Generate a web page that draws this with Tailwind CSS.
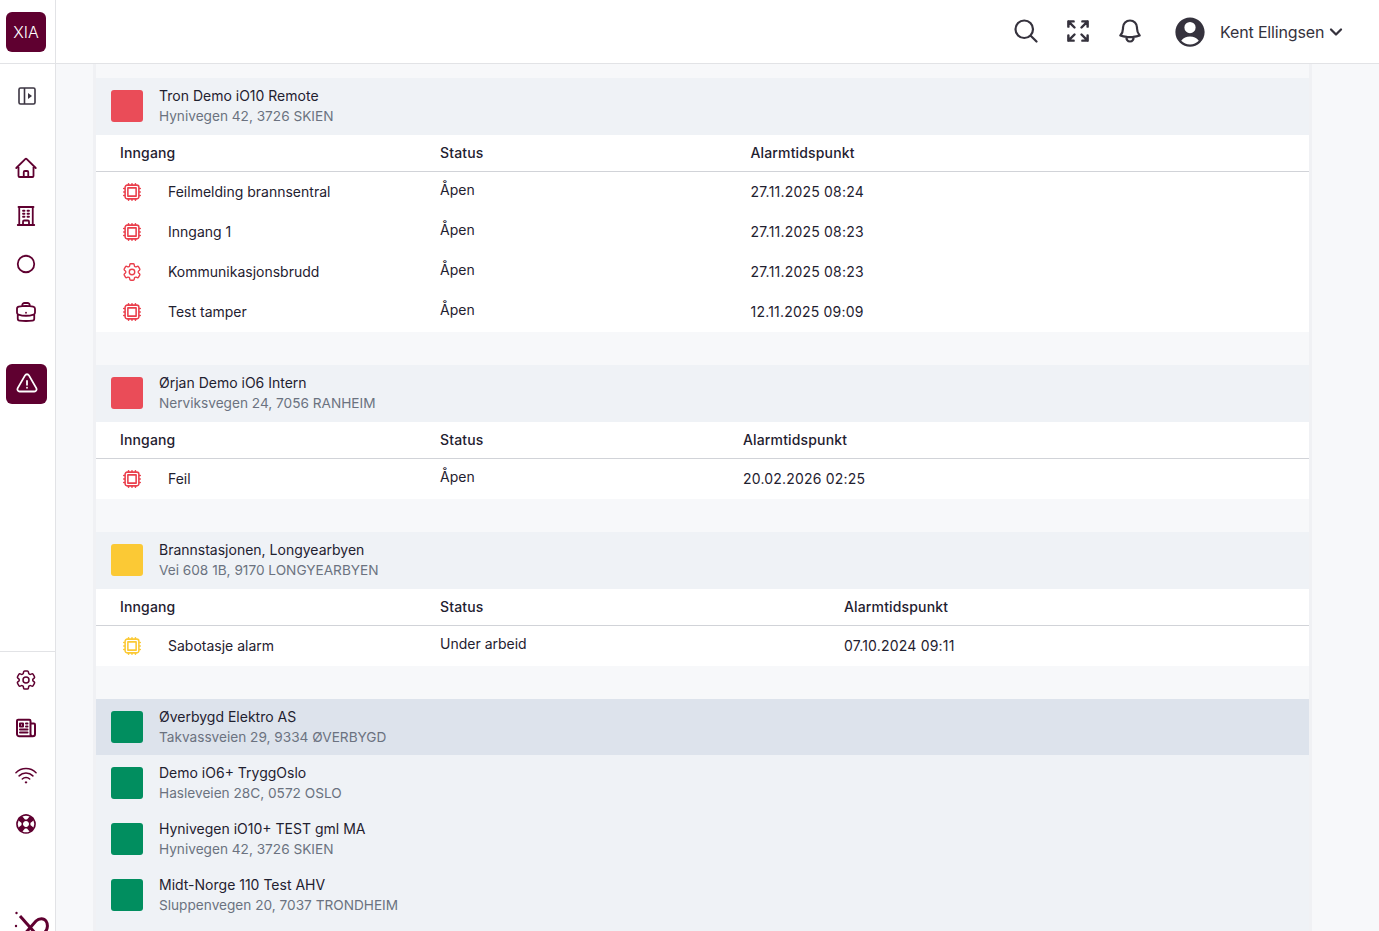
<!DOCTYPE html>
<html lang="no">
<head>
  <meta charset="UTF-8" />
  <script src="https://cdn.jsdelivr.net/npm/@tailwindcss/browser@4"></script>
  <title>XIA alarmer</title>
</head>
<body class="h-screen overflow-hidden bg-[#f7f8fa] font-['Inter',sans-serif] text-sm text-[#1f2130]">
<svg class="hidden">
  <symbol id="chip" viewBox="0 0 24 24"><path fill="none" stroke="currentColor" stroke-width="1.7" stroke-linecap="round" stroke-linejoin="round" d="M8.25 3v1.5M4.5 8.25H3m18 0h-1.5M4.5 12H3m18 0h-1.5m-15 3.75H3m18 0h-1.5M8.25 19.5V21M12 3v1.5m0 15V21m3.75-18v1.5m0 15V21m-9-1.5h10.5a2.25 2.25 0 0 0 2.25-2.25V6.75a2.25 2.25 0 0 0-2.25-2.25H6.75A2.25 2.25 0 0 0 4.5 6.75v10.5a2.25 2.25 0 0 0 2.25 2.25Zm.75-12h9v9h-9v-9Z"/></symbol>
  <symbol id="cog" viewBox="0 0 24 24"><path fill="none" stroke="currentColor" stroke-width="1.5" stroke-linecap="round" stroke-linejoin="round" d="M9.594 3.94c.09-.542.56-.94 1.11-.94h2.593c.55 0 1.02.398 1.11.94l.213 1.281c.063.374.313.686.645.87.074.04.147.083.22.127.325.196.72.257 1.075.124l1.217-.456a1.125 1.125 0 0 1 1.37.49l1.296 2.247a1.125 1.125 0 0 1-.26 1.431l-1.003.827c-.293.241-.438.613-.43.992a7.723 7.723 0 0 1 0 .255c-.008.378.137.75.43.991l1.004.827c.424.35.534.955.26 1.43l-1.298 2.247a1.125 1.125 0 0 1-1.369.491l-1.217-.456c-.355-.133-.75-.072-1.076.124a6.47 6.47 0 0 1-.22.128c-.331.183-.581.495-.644.869l-.213 1.281c-.09.543-.56.94-1.11.94h-2.594c-.55 0-1.019-.398-1.11-.94l-.213-1.281c-.062-.374-.312-.686-.644-.87a6.52 6.52 0 0 1-.22-.127c-.325-.196-.72-.257-1.076-.124l-1.217.456a1.125 1.125 0 0 1-1.369-.49l-1.297-2.247a1.125 1.125 0 0 1 .26-1.431l1.004-.827c.292-.24.437-.613.43-.991a6.932 6.932 0 0 1 0-.255c.007-.38-.138-.751-.43-.992l-1.004-.827a1.125 1.125 0 0 1-.26-1.43l1.297-2.247a1.125 1.125 0 0 1 1.37-.491l1.216.456c.356.133.751.072 1.076-.124.072-.044.146-.086.22-.128.332-.183.582-.495.644-.869l.214-1.28Z M15 12a3 3 0 1 1-6 0 3 3 0 0 1 6 0Z"/></symbol>
</svg>

<div class="flex h-full">
  <!-- sidebar -->
  <aside class="flex h-full w-[56px] shrink-0 flex-col overflow-hidden border-r border-[#e2e3e6] bg-white text-[#5f0030]">
    <div class="flex h-[64px] shrink-0 items-center border-b border-[#e2e3e6] pl-[6px]">
      <div class="flex h-10 w-10 items-center justify-center rounded-md bg-[#5f0030] text-base font-light text-white">XIA</div>
    </div>
    <div class="flex h-[588px] shrink-0 flex-col border-b border-[#e2e3e6]">
      <div class="flex h-[64px] shrink-0 items-center pl-[18px] text-[#3b3542]">
        <svg class="h-[18px] w-[18px]" viewBox="0 0 18 18"><rect x="1" y="1" width="16" height="16" rx="1.5" fill="none" stroke="currentColor" stroke-width="1.6"/><path d="M6.5 1v16" stroke="currentColor" stroke-width="1.6"/><path d="M10 6l4 3-4 3z" fill="currentColor"/></svg>
      </div>
      <div class="mt-[28px] flex flex-col items-start gap-6 pl-[14px]">
        <svg class="h-6 w-6" fill="none" viewBox="0 0 24 24" stroke="currentColor" stroke-width="1.8"><path stroke-linecap="round" stroke-linejoin="round" d="m2.25 12 8.954-8.955c.44-.439 1.152-.439 1.591 0L21.75 12M4.5 9.75v10.125c0 .621.504 1.125 1.125 1.125H9.75v-4.875c0-.621.504-1.125 1.125-1.125h2.25c.621 0 1.125.504 1.125 1.125V21h4.125c.621 0 1.125-.504 1.125-1.125V9.75M8.25 21h8.25"/></svg>
        <svg class="h-6 w-6" fill="none" viewBox="0 0 24 24" stroke="currentColor" stroke-width="1.8"><path stroke-linecap="round" stroke-linejoin="round" d="M3.75 21h16.5M4.5 3h15M5.25 3v18m13.5-18v18M9 6.75h1.5m-1.5 3h1.5m-1.5 3h1.5m3-6H15m-1.5 3H15m-1.5 3H15M9 21v-3.375c0-.621.504-1.125 1.125-1.125h3.75c.621 0 1.125.504 1.125 1.125V21"/></svg>
        <svg class="h-6 w-6" fill="none" viewBox="0 0 24 24" stroke="currentColor" stroke-width="1.8"><circle cx="12" cy="12" r="8.25"/></svg>
        <svg class="h-6 w-6" fill="none" viewBox="0 0 24 24" stroke="currentColor" stroke-width="1.8"><path stroke-linecap="round" stroke-linejoin="round" d="M20.25 14.15v4.25c0 1.094-.787 2.036-1.872 2.18-2.087.277-4.216.42-6.378.42s-4.291-.143-6.378-.42c-1.085-.144-1.872-1.086-1.872-2.18v-4.25m16.5 0a2.18 2.18 0 0 0 .75-1.661V8.706c0-1.081-.768-2.015-1.837-2.175a48.114 48.114 0 0 0-3.413-.387m4.5 8.006c-.194.165-.42.295-.673.38A23.978 23.978 0 0 1 12 15.75c-2.648 0-5.195-.429-7.577-1.22a2.016 2.016 0 0 1-.673-.38m0 0A2.18 2.18 0 0 1 3 12.489V8.706c0-1.081.768-2.015 1.837-2.175a48.111 48.111 0 0 1 3.413-.387m7.5 0V5.25A2.25 2.25 0 0 0 13.5 3h-3a2.25 2.25 0 0 0-2.25 2.25v.894m7.5 0a48.667 48.667 0 0 0-7.5 0M12 12.75h.008v.008H12v-.008Z"/></svg>
      </div>
      <div class="ml-[6px] mt-[40px] flex h-10 w-[41px] items-center justify-center rounded-md bg-[#5f0030] text-white">
        <svg class="h-6 w-6" fill="none" viewBox="0 0 24 24" stroke="currentColor" stroke-width="1.8"><path stroke-linecap="round" stroke-linejoin="round" d="M12 9v3.75m-9.303 3.376c-.866 1.5.217 3.374 1.948 3.374h14.71c1.73 0 2.813-1.874 1.948-3.374L13.949 3.378c-.866-1.5-3.032-1.5-3.898 0L2.697 16.126ZM12 15.75h.007v.008H12v-.008Z"/></svg>
      </div>
    </div>
    <div class="mt-[16px] flex flex-col gap-6 pl-[14px]">
      <svg class="h-6 w-6"><use href="#cog"/></svg>
      <svg class="h-6 w-6" fill="none" viewBox="0 0 24 24" stroke="currentColor" stroke-width="2"><path stroke-linecap="round" stroke-linejoin="round" d="M12 7.5h1.5m-1.5 3h1.5m-7.5 3h7.5m-7.5 3h7.5m3-9h3.375c.621 0 1.125.504 1.125 1.125V18a2.25 2.25 0 0 1-2.25 2.25M16.5 7.5V18a2.25 2.25 0 0 0 2.25 2.25M16.5 7.5V4.875c0-.621-.504-1.125-1.125-1.125H4.125C3.504 3.75 3 4.254 3 4.875V18a2.25 2.25 0 0 0 2.25 2.25h13.5M6 7.5h3v3H6v-3Z"/></svg>
      <svg class="h-6 w-6" fill="none" viewBox="0 0 24 24" stroke="currentColor" stroke-width="1.5"><path stroke-linecap="round" stroke-linejoin="round" d="M8.288 15.038a5.25 5.25 0 0 1 7.424 0M5.106 11.856c3.807-3.808 9.98-3.808 13.788 0M1.924 8.674c5.565-5.565 14.587-5.565 20.152 0M12.53 18.22l-.53.53-.53-.53a.75.75 0 0 1 1.06 0Z"/></svg>
      <svg class="h-6 w-6" viewBox="0 0 24 24" fill="currentColor"><path fill-rule="evenodd" clip-rule="evenodd" d="M19.449 8.448 16.388 11a4.52 4.52 0 0 1 0 2.002l3.061 2.55a8.275 8.275 0 0 0 0-7.103ZM15.552 19.45 13 16.388a4.52 4.52 0 0 1-2.002 0l-2.55 3.061a8.275 8.275 0 0 0 7.103 0ZM4.55 15.552 7.612 13a4.52 4.52 0 0 1 0-2.002L4.551 8.45a8.275 8.275 0 0 0 0 7.103ZM8.448 4.55 11 7.612a4.52 4.52 0 0 1 2.002 0l2.55-3.061a8.275 8.275 0 0 0-7.103 0Zm8.657-.86a9.776 9.776 0 0 1 1.79 1.415 9.776 9.776 0 0 1 1.414 1.788 9.764 9.764 0 0 1 0 10.211 9.777 9.777 0 0 1-1.415 1.79 9.777 9.777 0 0 1-1.788 1.414 9.764 9.764 0 0 1-10.212 0 9.776 9.776 0 0 1-1.788-1.415 9.776 9.776 0 0 1-1.415-1.788 9.764 9.764 0 0 1 0-10.212 9.774 9.774 0 0 1 1.415-1.788A9.774 9.774 0 0 1 6.894 3.69a9.764 9.764 0 0 1 10.211 0ZM14.121 9.88a2.985 2.985 0 0 0-1.11-.704 3.015 3.015 0 0 0-2.022 0 2.985 2.985 0 0 0-1.11.704c-.326.325-.56.705-.704 1.11a3.015 3.015 0 0 0 0 2.022c.144.405.378.785.704 1.11.325.326.705.56 1.11.704.652.233 1.37.233 2.022 0a2.985 2.985 0 0 0 1.11-.704c.326-.325.56-.705.704-1.11a3.016 3.016 0 0 0 0-2.022 2.985 2.985 0 0 0-.704-1.11Z"/></svg>
    </div>
    <!-- logo, cut by the window edge -->
    <svg class="ml-[14px] mt-[73px] h-[32px] w-[36px] shrink-0" viewBox="0 0 36 32" fill="none" stroke="currentColor" stroke-width="3">
      <path d="M6 7l16 18" />
      <path d="M8 28 L22 12 c3-3 8-3 10 0 s2 8-1 11 L26 30" />
      <circle cx="2.5" cy="4" r="1.2" fill="currentColor" stroke="none"/>
      <circle cx="2" cy="17" r="1.2" fill="currentColor" stroke="none"/>
    </svg>
  </aside>

  <div class="flex min-w-0 flex-1 flex-col">
    <!-- top bar -->
    <header class="flex h-[64px] shrink-0 items-center border-b border-[#e2e3e6] bg-white pl-[956px] text-[#35323d]">
      <svg class="-mt-[2px] h-[28px] w-[28px]" fill="none" viewBox="0 0 24 24" stroke="currentColor" stroke-width="1.9"><path stroke-linecap="round" stroke-linejoin="round" d="m21 21-5.197-5.197m0 0A7.5 7.5 0 1 0 5.196 5.196a7.5 7.5 0 0 0 10.607 10.607Z"/></svg>
      <svg class="-mt-[2px] ml-[24px] h-[28px] w-[28px]" fill="none" viewBox="0 0 24 24" stroke="currentColor" stroke-width="2.1"><path stroke-linecap="round" stroke-linejoin="round" d="M3.75 3.75v4.5m0-4.5h4.5m-4.5 0L9 9M3.75 20.25v-4.5m0 4.5h4.5m-4.5 0L9 15M20.25 3.75h-4.5m4.5 0v4.5m0-4.5L15 9m5.25 11.25h-4.5m4.5 0v-4.5m0 4.5L15 15"/></svg>
      <svg class="-mt-[2px] ml-[24px] h-[28px] w-[28px]" fill="none" viewBox="0 0 24 24" stroke="currentColor" stroke-width="1.9"><path stroke-linecap="round" stroke-linejoin="round" d="M14.857 17.082a23.848 23.848 0 0 0 5.454-1.31A8.967 8.967 0 0 1 18 9.75V9A6 6 0 0 0 6 9v.75a8.967 8.967 0 0 1-2.312 6.022c1.733.64 3.56 1.085 5.455 1.31m5.714 0a24.255 24.255 0 0 1-5.714 0m5.714 0a3 3 0 1 1-5.714 0"/></svg>
      <svg class="ml-[28px] h-9 w-9" viewBox="0 0 24 24" fill="currentColor"><path fill-rule="evenodd" clip-rule="evenodd" d="M18.685 19.097A9.723 9.723 0 0 0 21.75 12c0-5.385-4.365-9.75-9.75-9.75S2.25 6.615 2.25 12a9.723 9.723 0 0 0 3.065 7.097A9.716 9.716 0 0 0 12 21.75a9.716 9.716 0 0 0 6.685-2.653Zm-12.54-1.285A7.486 7.486 0 0 1 12 15a7.486 7.486 0 0 1 5.855 2.812A8.224 8.224 0 0 1 12 20.25a8.224 8.224 0 0 1-5.855-2.438ZM15.75 9a3.75 3.75 0 1 1-7.5 0 3.75 3.75 0 0 1 7.5 0Z"/></svg>
      <span class="ml-[12px] text-base tracking-[-0.15px]">Kent Ellingsen</span>
      <svg class="ml-[4px] h-[16px] w-[16px]" fill="none" viewBox="0 0 24 24" stroke="currentColor" stroke-width="3.4"><path stroke-linecap="round" stroke-linejoin="round" d="m19.5 8.25-7.5 7.5-7.5-7.5"/></svg>
    </header>

    <!-- alarm list -->
    <main class="ml-[37px] w-[1219px] flex-1 overflow-hidden border-x-[3px] border-[#f0f1f4] pt-[14px]">

      <div class="flex h-[57px] items-start gap-4 bg-[#eff2f6] pl-[15px] pt-[12px]">
        <div class="h-8 w-8 rounded-[3px] bg-[#ea4c58]"></div>
        <div class="-mt-[4px]"><p class="leading-5">Tron Demo iO10 Remote</p><p class="text-[13.65px] leading-5 text-[#6b7280]">Hynivegen 42, 3726 SKIEN</p></div>
      </div>
      <div class="bg-white">
        <div class="grid h-[37px] grid-cols-[320px_310.5px_1fr] items-center border-b border-[#d1d3d8] pl-[24px] font-medium tracking-[0.15px]"><span>Inngang</span><span>Status</span><span>Alarmtidspunkt</span></div>
        <div class="grid h-10 grid-cols-[48px_272px_310.5px_1fr] items-center pl-[25px]"><svg class="h-[22px] w-[22px] text-[#ea3f4c]"><use href="#chip"/></svg><span class="-ml-px">Feilmelding brannsentral</span><span class="-ml-px -mt-1">Åpen</span><span class="-ml-px tracking-[0.2px]">27.11.2025 08:24</span></div>
        <div class="grid h-10 grid-cols-[48px_272px_310.5px_1fr] items-center pl-[25px]"><svg class="h-[22px] w-[22px] text-[#ea3f4c]"><use href="#chip"/></svg><span class="-ml-px">Inngang 1</span><span class="-ml-px -mt-1">Åpen</span><span class="-ml-px tracking-[0.2px]">27.11.2025 08:23</span></div>
        <div class="grid h-10 grid-cols-[48px_272px_310.5px_1fr] items-center pl-[25px]"><svg class="h-[22px] w-[22px] text-[#ea3f4c]"><use href="#cog"/></svg><span class="-ml-px">Kommunikasjonsbrudd</span><span class="-ml-px -mt-1">Åpen</span><span class="-ml-px tracking-[0.2px]">27.11.2025 08:23</span></div>
        <div class="grid h-10 grid-cols-[48px_272px_310.5px_1fr] items-center pl-[25px]"><svg class="h-[22px] w-[22px] text-[#ea3f4c]"><use href="#chip"/></svg><span class="-ml-px">Test tamper</span><span class="-ml-px -mt-1">Åpen</span><span class="-ml-px tracking-[0.2px]">12.11.2025 09:09</span></div>
      </div>

      <div class="mt-[33px] flex h-[57px] items-start gap-4 bg-[#eff2f6] pl-[15px] pt-[12px]">
        <div class="h-8 w-8 rounded-[3px] bg-[#ea4c58]"></div>
        <div class="-mt-[4px]"><p class="leading-5">Ørjan Demo iO6 Intern</p><p class="text-[13.65px] leading-5 text-[#6b7280]">Nerviksvegen 24, 7056 RANHEIM</p></div>
      </div>
      <div class="bg-white">
        <div class="grid h-[37px] grid-cols-[320px_303px_1fr] items-center border-b border-[#d1d3d8] pl-[24px] font-medium tracking-[0.15px]"><span>Inngang</span><span>Status</span><span>Alarmtidspunkt</span></div>
        <div class="grid h-10 grid-cols-[48px_272px_303px_1fr] items-center pl-[25px]"><svg class="h-[22px] w-[22px] text-[#ea3f4c]"><use href="#chip"/></svg><span class="-ml-px">Feil</span><span class="-ml-px -mt-1">Åpen</span><span class="-ml-px tracking-[0.2px]">20.02.2026 02:25</span></div>
      </div>

      <div class="mt-[33px] flex h-[57px] items-start gap-4 bg-[#eff2f6] pl-[15px] pt-[12px]">
        <div class="h-8 w-8 rounded-[3px] bg-[#fbc935]"></div>
        <div class="-mt-[4px]"><p class="leading-5">Brannstasjonen, Longyearbyen</p><p class="text-[13.65px] leading-5 text-[#6b7280]">Vei 608 1B, 9170 LONGYEARBYEN</p></div>
      </div>
      <div class="bg-white">
        <div class="grid h-[37px] grid-cols-[320px_404px_1fr] items-center border-b border-[#d1d3d8] pl-[24px] font-medium tracking-[0.15px]"><span>Inngang</span><span>Status</span><span>Alarmtidspunkt</span></div>
        <div class="grid h-10 grid-cols-[48px_272px_404px_1fr] items-center pl-[25px]"><svg class="h-[22px] w-[22px] text-[#fbc935]"><use href="#chip"/></svg><span class="-ml-px">Sabotasje alarm</span><span class="-ml-px -mt-1">Under arbeid</span><span class="-ml-px tracking-[0.2px]">07.10.2024 09:11</span></div>
      </div>

      <div class="mt-[33px] bg-[#eff2f6]">
        <div class="flex h-14 items-center gap-4 bg-[#dde3ec] pl-[15px]">
          <div class="h-8 w-8 rounded-[3px] bg-[#018e5f]"></div>
          <div><p class="leading-5">Øverbygd Elektro AS</p><p class="text-[13.65px] leading-5 text-[#6b7280]">Takvassveien 29, 9334 ØVERBYGD</p></div>
        </div>
        <div class="flex h-14 items-center gap-4 pl-[15px]">
          <div class="h-8 w-8 rounded-[3px] bg-[#018e5f]"></div>
          <div><p class="leading-5">Demo iO6+ TryggOslo</p><p class="text-[13.65px] leading-5 text-[#6b7280]">Hasleveien 28C, 0572 OSLO</p></div>
        </div>
        <div class="flex h-14 items-center gap-4 pl-[15px]">
          <div class="h-8 w-8 rounded-[3px] bg-[#018e5f]"></div>
          <div><p class="leading-5">Hynivegen iO10+ TEST gml MA</p><p class="text-[13.65px] leading-5 text-[#6b7280]">Hynivegen 42, 3726 SKIEN</p></div>
        </div>
        <div class="flex h-14 items-center gap-4 pl-[15px]">
          <div class="h-8 w-8 rounded-[3px] bg-[#018e5f]"></div>
          <div><p class="leading-5">Midt-Norge 110 Test AHV</p><p class="text-[13.65px] leading-5 text-[#6b7280]">Sluppenvegen 20, 7037 TRONDHEIM</p></div>
        </div>
        <div class="h-14"></div>
      </div>
    </main>
  </div>
</div>
</body>
</html>
